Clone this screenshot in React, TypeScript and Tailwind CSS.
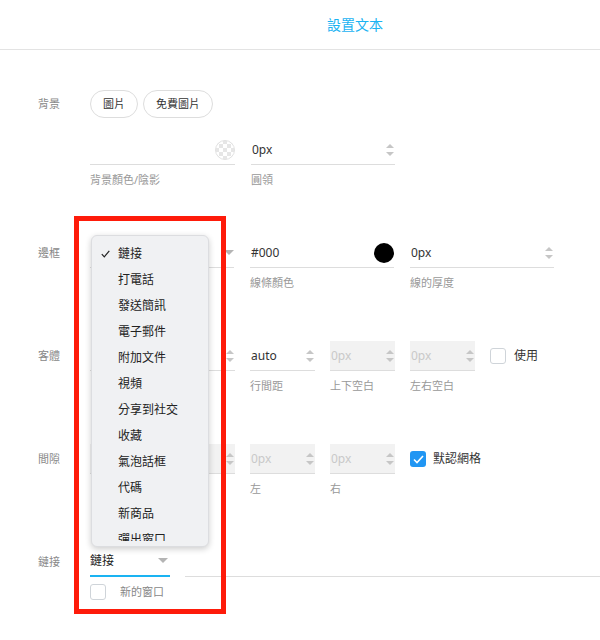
import React from 'react';

const menuItems = ['鏈接', '打電話', '發送簡訊', '電子郵件', '附加文件', '視頻', '分享到社交', '收藏', '氣泡話框', '代碼', '新商品', '彈出窗口'];

const Spinner = () => (
  <svg width="10" height="14" viewBox="0 0 10 14" className="shrink-0">
    <path d="M1 5 L5 1 L9 5 Z" fill="#c6c6c6" />
    <path d="M1 9 L5 13 L9 9 Z" fill="#c6c6c6" />
  </svg>
);

const Caret = () => (
  <svg width="10" height="6" viewBox="0 0 10 6" className="shrink-0">
    <path d="M0 0 L10 0 L5 5 Z" fill="#b4b4b4" />
  </svg>
);

const Checker = () => (
  <svg width="20" height="20" viewBox="0 0 20 20" className="shrink-0">
    <defs>
      <pattern id="chk" width="8" height="8" patternUnits="userSpaceOnUse">
        <rect width="8" height="8" fill="#ffffff" />
        <rect width="4" height="4" fill="#e6e6e6" />
        <rect x="4" y="4" width="4" height="4" fill="#e6e6e6" />
      </pattern>
    </defs>
    <circle cx="10" cy="10" r="9.5" fill="url(#chk)" stroke="#e2e2e2" />
  </svg>
);

type FieldProps = {
  w: string;
  value?: string;
  right?: React.ReactNode;
  disabled?: boolean;
  label?: string;
};

const Field = ({ w, value, right, disabled, label }: FieldProps) => (
  <div className={w}>
    <div
      className={`h-[30px] flex items-center justify-between border-b border-[#dddddd] ${
        disabled ? 'bg-[#f2f2f2] text-[#c9c9c9]' : 'text-[#333333]'
      }`}
    >
      <span className="text-[12px] pl-[1px]">{value}</span>
      {right}
    </div>
    {label && <div className="mt-[7px] text-[11px] leading-4 text-[#999999]">{label}</div>}
  </div>
);

const Box = ({ checked }: { checked?: boolean }) =>
  checked ? (
    <span className="w-4 h-4 rounded-[3px] bg-[#2196f3] flex items-center justify-center shrink-0">
      <svg width="11" height="9" viewBox="0 0 11 9">
        <path d="M1 4.5 L4 7.5 L10 1" fill="none" stroke="#ffffff" strokeWidth="1.6" />
      </svg>
    </span>
  ) : (
    <span className="w-4 h-4 rounded-[3px] border border-[#cfd4d9] bg-white shrink-0" />
  );

const Label = ({ children, tall }: { children: React.ReactNode; tall?: boolean }) => (
  <div
    className={`w-[90px] shrink-0 pl-[38px] text-[11px] text-[#888888] flex items-center ${
      tall ? 'h-[28px]' : 'h-[30px]'
    }`}
  >
    {children}
  </div>
);

export default function App() {
  return (
    <div className="relative w-[600px] h-[640px] bg-white overflow-hidden font-['Noto_Sans','Noto_Sans_CJK_TC',sans-serif]">
      {/* header */}
      <div className="h-[50px] border-b border-[#e3e3e3] flex items-center justify-center pl-[110px]">
        <span className="text-[14px] text-[#1ab3f2]">設置文本</span>
      </div>

      {/* 背景 */}
      <div className="flex mt-[40px]">
        <Label tall>背景</Label>
        <div>
          <div className="flex gap-[5px]">
            <button className="h-[28px] px-[12px] rounded-full border border-[#dddddd] text-[11px] text-[#333333]">圖片</button>
            <button className="h-[28px] px-[12px] rounded-full border border-[#dddddd] text-[11px] text-[#333333]">免費圖片</button>
          </div>
          <div className="flex gap-[16px] mt-[17px]">
            <Field w="w-[145px]" value="" right={<Checker />} label="背景顏色/陰影" />
            <Field w="w-[144px]" value="0px" right={<Spinner />} label="圓領" />
          </div>
        </div>
      </div>

      {/* 邊框 */}
      <div className="flex mt-[50px]">
        <Label>邊框</Label>
        <div className="flex gap-[16px]">
          <Field w="w-[144px]" right={<Caret />} />
          <Field
            w="w-[144px]"
            value="#000"
            right={<span className="w-5 h-5 rounded-full bg-black shrink-0" />}
            label="線條顏色"
          />
          <Field w="w-[144px]" value="0px" right={<Spinner />} label="線的厚度" />
        </div>
      </div>

      {/* 客體 */}
      <div className="flex mt-[50px]">
        <Label>客體</Label>
        <div className="flex gap-[15px]">
          <Field w="w-[145px]" right={<Spinner />} />
          <Field w="w-[65px]" value="auto" right={<Spinner />} label="行間距" />
          <Field w="w-[65px]" value="0px" disabled right={<Spinner />} label="上下空白" />
          <Field w="w-[65px]" value="0px" disabled right={<Spinner />} label="左右空白" />
          <div className="h-[30px] flex items-center gap-[8px]">
            <Box />
            <span className="text-[12px] text-[#333333]">使用</span>
          </div>
        </div>
      </div>

      {/* 間隙 */}
      <div className="flex mt-[50px]">
        <Label>間隙</Label>
        <div className="flex gap-[15px]">
          <Field w="w-[145px]" disabled right={<Spinner />} />
          <Field w="w-[65px]" value="0px" disabled right={<Spinner />} label="左" />
          <Field w="w-[65px]" value="0px" disabled right={<Spinner />} label="右" />
          <div className="h-[30px] flex items-center gap-[7px]">
            <Box checked />
            <span className="text-[12px] text-[#333333]">默認網格</span>
          </div>
        </div>
      </div>

      {/* 鏈接 */}
      <div className="flex mt-[50px]">
        <Label>鏈接</Label>
        <div className="flex-1">
          <div className="flex gap-[15px]">
            <div className="w-[80px] h-[30px] flex items-center justify-between border-b-2 border-[#1ab3f2] pr-[2px]">
              <span className="text-[12px] text-[#222222]">鏈接</span>
              <Caret />
            </div>
            <div className="flex-1 h-[30px] border-b border-[#dddddd]" />
          </div>
          <div className="flex items-center gap-[14px] mt-[7px]">
            <Box />
            <span className="text-[11px] text-[#888888]">新的窗口</span>
          </div>
        </div>
      </div>

      {/* open select menu */}
      <div className="absolute left-[91px] top-[235px] w-[118px] h-[312px] rounded-[6px] bg-[#f0f1f3] border border-[#dcdde0] shadow-[0_2px_6px_rgba(0,0,0,0.2)] py-[5px]">
        <div className="h-full overflow-hidden">
          {menuItems.map((item, i) => (
            <div key={item} className="h-[26px] flex items-center text-[12px] text-[#222222]">
              <span className="w-[26px] flex justify-end pr-[8px]">
                {i === 0 && (
                  <svg width="9" height="8" viewBox="0 0 9 8">
                    <path d="M0.8 4.2 L3.3 6.8 L8.3 0.8" fill="none" stroke="#222222" strokeWidth="1.2" />
                  </svg>
                )}
              </span>
              <span>{item}</span>
            </div>
          ))}
        </div>
      </div>

      {/* annotation frame */}
      <div className="absolute left-[74px] top-[216px] w-[152px] h-[398px] border-[5px] border-[#fe1b0a] pointer-events-none" />
    </div>
  );
}
